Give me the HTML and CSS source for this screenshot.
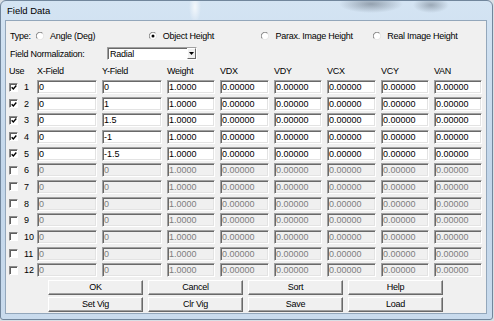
FILE: index.html
```html
<!DOCTYPE html>
<html>
<head>
<meta charset="utf-8">
<link rel="stylesheet" href="styles.css">
</head>
<body>
<div class="window">
  <div class="titlebar"><span class="title">Field Data</span></div>
  <div class="client">
    <div class="type-row">
      <span class="type-label">Type:</span>
      <span class="opt"><svg class="radio" viewBox="0 0 8 8"><circle cx="4" cy="4" r="3.5" fill="#fff"/><path d="M1.3 6.7A3.6 3.6 0 0 1 6.7 1.3" stroke="#7a7a7a" stroke-width="1" fill="none"/><path d="M6.7 1.3A3.6 3.6 0 0 1 1.3 6.7" stroke="#e3e3e3" stroke-width="1" fill="none"/></svg><span class="lbl">Angle (Deg)</span></span>
      <span class="opt"><svg class="radio" viewBox="0 0 8 8"><circle cx="4" cy="4" r="3.5" fill="#fff"/><path d="M1.3 6.7A3.6 3.6 0 0 1 6.7 1.3" stroke="#7a7a7a" stroke-width="1" fill="none"/><path d="M6.7 1.3A3.6 3.6 0 0 1 1.3 6.7" stroke="#e3e3e3" stroke-width="1" fill="none"/><circle cx="4" cy="4" r="1.5" fill="#000"/></svg><span class="lbl">Object Height</span></span>
      <span class="opt opt-narrow"><svg class="radio" viewBox="0 0 8 8"><circle cx="4" cy="4" r="3.5" fill="#fff"/><path d="M1.3 6.7A3.6 3.6 0 0 1 6.7 1.3" stroke="#7a7a7a" stroke-width="1" fill="none"/><path d="M6.7 1.3A3.6 3.6 0 0 1 1.3 6.7" stroke="#e3e3e3" stroke-width="1" fill="none"/></svg><span class="lbl">Parax. Image Height</span></span>
      <span class="opt"><svg class="radio" viewBox="0 0 8 8"><circle cx="4" cy="4" r="3.5" fill="#fff"/><path d="M1.3 6.7A3.6 3.6 0 0 1 6.7 1.3" stroke="#7a7a7a" stroke-width="1" fill="none"/><path d="M6.7 1.3A3.6 3.6 0 0 1 1.3 6.7" stroke="#e3e3e3" stroke-width="1" fill="none"/></svg><span class="lbl">Real Image Height</span></span>
    </div>
    <div class="norm-row">
      <span class="norm-label">Field Normalization:</span>
      <div class="combo"><span class="combo-text">Radial</span><span class="combo-btn"><svg width="5" height="3" viewBox="0 0 5 3"><path d="M0 0H5L2.5 3Z" fill="#000"/></svg></span></div>
    </div>
    <div class="grid head">
      <span>Use</span><span>X-Field</span><span>Y-Field</span><span>Weight</span><span>VDX</span><span>VDY</span><span>VCX</span><span>VCY</span><span>VAN</span>
    </div>
    <div class="grid rows">
      <div class="use"><span class="cb"><svg viewBox="0 0 7 7"><path d="M0.8 3.2L2.7 5.2L6.2 1.2" stroke="#000" stroke-width="1.6" fill="none"/></svg></span><span>1</span></div>
      <div class="fld">0</div><div class="fld">0</div><div class="fld">1.0000</div><div class="fld">0.00000</div><div class="fld">0.00000</div><div class="fld">0.00000</div><div class="fld">0.00000</div><div class="fld">0.00000</div>
      <div class="use"><span class="cb"><svg viewBox="0 0 7 7"><path d="M0.8 3.2L2.7 5.2L6.2 1.2" stroke="#000" stroke-width="1.6" fill="none"/></svg></span><span>2</span></div>
      <div class="fld">0</div><div class="fld">1</div><div class="fld">1.0000</div><div class="fld">0.00000</div><div class="fld">0.00000</div><div class="fld">0.00000</div><div class="fld">0.00000</div><div class="fld">0.00000</div>
      <div class="use"><span class="cb"><svg viewBox="0 0 7 7"><path d="M0.8 3.2L2.7 5.2L6.2 1.2" stroke="#000" stroke-width="1.6" fill="none"/></svg></span><span>3</span></div>
      <div class="fld">0</div><div class="fld">1.5</div><div class="fld">1.0000</div><div class="fld">0.00000</div><div class="fld">0.00000</div><div class="fld">0.00000</div><div class="fld">0.00000</div><div class="fld">0.00000</div>
      <div class="use"><span class="cb"><svg viewBox="0 0 7 7"><path d="M0.8 3.2L2.7 5.2L6.2 1.2" stroke="#000" stroke-width="1.6" fill="none"/></svg></span><span>4</span></div>
      <div class="fld">0</div><div class="fld">-1</div><div class="fld">1.0000</div><div class="fld">0.00000</div><div class="fld">0.00000</div><div class="fld">0.00000</div><div class="fld">0.00000</div><div class="fld">0.00000</div>
      <div class="use"><span class="cb"><svg viewBox="0 0 7 7"><path d="M0.8 3.2L2.7 5.2L6.2 1.2" stroke="#000" stroke-width="1.6" fill="none"/></svg></span><span>5</span></div>
      <div class="fld">0</div><div class="fld">-1.5</div><div class="fld">1.0000</div><div class="fld">0.00000</div><div class="fld">0.00000</div><div class="fld">0.00000</div><div class="fld">0.00000</div><div class="fld">0.00000</div>
      <div class="use"><span class="cb"></span><span>6</span></div>
      <div class="fld off">0</div><div class="fld off">0</div><div class="fld off">1.0000</div><div class="fld off">0.00000</div><div class="fld off">0.00000</div><div class="fld off">0.00000</div><div class="fld off">0.00000</div><div class="fld off">0.00000</div>
      <div class="use"><span class="cb"></span><span>7</span></div>
      <div class="fld off">0</div><div class="fld off">0</div><div class="fld off">1.0000</div><div class="fld off">0.00000</div><div class="fld off">0.00000</div><div class="fld off">0.00000</div><div class="fld off">0.00000</div><div class="fld off">0.00000</div>
      <div class="use"><span class="cb"></span><span>8</span></div>
      <div class="fld off">0</div><div class="fld off">0</div><div class="fld off">1.0000</div><div class="fld off">0.00000</div><div class="fld off">0.00000</div><div class="fld off">0.00000</div><div class="fld off">0.00000</div><div class="fld off">0.00000</div>
      <div class="use"><span class="cb"></span><span>9</span></div>
      <div class="fld off">0</div><div class="fld off">0</div><div class="fld off">1.0000</div><div class="fld off">0.00000</div><div class="fld off">0.00000</div><div class="fld off">0.00000</div><div class="fld off">0.00000</div><div class="fld off">0.00000</div>
      <div class="use"><span class="cb"></span><span>10</span></div>
      <div class="fld off">0</div><div class="fld off">0</div><div class="fld off">1.0000</div><div class="fld off">0.00000</div><div class="fld off">0.00000</div><div class="fld off">0.00000</div><div class="fld off">0.00000</div><div class="fld off">0.00000</div>
      <div class="use"><span class="cb"></span><span>11</span></div>
      <div class="fld off">0</div><div class="fld off">0</div><div class="fld off">1.0000</div><div class="fld off">0.00000</div><div class="fld off">0.00000</div><div class="fld off">0.00000</div><div class="fld off">0.00000</div><div class="fld off">0.00000</div>
      <div class="use"><span class="cb"></span><span>12</span></div>
      <div class="fld off">0</div><div class="fld off">0</div><div class="fld off">1.0000</div><div class="fld off">0.00000</div><div class="fld off">0.00000</div><div class="fld off">0.00000</div><div class="fld off">0.00000</div><div class="fld off">0.00000</div>
    </div>
    <div class="buttons">
      <div class="btn">OK</div><div class="btn">Cancel</div><div class="btn">Sort</div><div class="btn">Help</div>
      <div class="btn">Set Vig</div><div class="btn">Clr Vig</div><div class="btn">Save</div><div class="btn">Load</div>
    </div>
  </div>
</div>
</body>
</html>
```

FILE: styles.css
```css
html, body {
  margin: 0;
  padding: 0;
}
body {
  background: #d9dfe5;
  font-family: "Liberation Sans", Arial, sans-serif;
  font-size: 9px;
  color: #000;
}
.window {
  width: 493px;
  height: 320px;
  box-sizing: border-box;
  border: 1px solid #71869c;
  border-radius: 6px 6px 3px 3px;
  padding: 0 5px 5px 4px;
  display: flex;
  flex-direction: column;
  background:
    radial-gradient(ellipse 32px 9px at 370px 3px, rgba(70,80,92,.45), rgba(70,80,92,0)),
    radial-gradient(ellipse 18px 8px at 430px 4px, rgba(70,80,92,.4), rgba(70,80,92,0)),
    radial-gradient(ellipse 6px 16px at 194px 6px, rgba(255,255,255,.75), rgba(255,255,255,0)),
    linear-gradient(180deg, #d4e4f3 0%, #c2d6ea 55%, #c9dbed 100%);
}
.titlebar {
  height: 19px;
  display: flex;
  align-items: center;
  padding-left: 2px;
  flex: none;
}
.title {
  font-size: 9.5px;
  color: #000;
}
.client {
  flex: 1;
  border: 1px solid #93a7bb;
  background: #f0f0f0;
  display: flex;
  flex-direction: column;
  letter-spacing: -0.25px;
}
.type-row {
  margin-top: 8px;
  height: 14px;
  display: flex;
  align-items: center;
  padding-left: 4px;
}
.type-label {
  width: 26px;
}
.opt {
  display: flex;
  align-items: center;
  gap: 6px;
  width: 113px;
}
.opt-narrow {
  width: 112px;
}
.radio {
  width: 8px;
  height: 8px;
  flex: none;
}
.norm-row {
  margin-top: 4px;
  height: 13px;
  display: flex;
  align-items: center;
  padding-left: 4px;
}
.norm-label {
  width: 97px;
}
.combo {
  width: 90px;
  height: 13px;
  box-sizing: border-box;
  background: #fff;
  border: 1px solid;
  border-color: #a0a0a0 #fff #fff #a0a0a0;
  box-shadow: inset 1px 1px 0 #696969;
  display: flex;
  align-items: center;
  justify-content: space-between;
}
.combo-text {
  padding-left: 2px;
}
.combo-btn {
  width: 9px;
  height: 11px;
  box-sizing: border-box;
  background: #f0f0f0;
  border: 1px solid;
  border-color: #fff #696969 #696969 #fff;
  display: flex;
  align-items: center;
  justify-content: center;
}
.grid {
  display: grid;
  grid-template-columns: 23px 60px 60px 48px 49px 48px 49px 48px 48px;
  column-gap: 5px;
  padding-left: 3px;
}
.head {
  margin-top: 4px;
  height: 14px;
  align-items: center;
}
.rows {
  margin-top: 2px;
  grid-template-rows: repeat(12, 16.667px);
  letter-spacing: 0;
}
.use {
  display: flex;
  align-items: center;
  gap: 6px;
  height: 14px;
}
.cb {
  width: 9px;
  height: 9px;
  box-sizing: border-box;
  background: #fff;
  border: 1px solid;
  border-color: #8a8a8a #fff #fff #8a8a8a;
  box-shadow: inset 1px 1px 0 #5e5e5e;
  display: flex;
  align-items: center;
  justify-content: center;
  flex: none;
}
.cb svg {
  width: 7px;
  height: 7px;
  margin: 1px 0 0 1px;
}
.fld {
  height: 14px;
  box-sizing: border-box;
  background: #fff;
  border: 1px solid;
  border-color: #a0a0a0 #fff #fff #a0a0a0;
  box-shadow: inset 1px 1px 0 #696969, inset -1px -1px 0 #e3e3e3;
  padding-left: 1px;
  display: flex;
  align-items: center;
  overflow: hidden;
  white-space: nowrap;
}
.fld.off {
  background: #f0f0f0;
  color: #7d7d7d;
}
.buttons {
  display: grid;
  grid-template-columns: repeat(4, 95px);
  grid-auto-rows: 15px;
  column-gap: 5px;
  row-gap: 2px;
  padding-left: 42px;
}
.btn {
  box-sizing: border-box;
  background: #f0f0f0;
  border: 1px solid;
  border-color: #fff #696969 #696969 #fff;
  box-shadow: inset -1px -1px 0 #a0a0a0;
  display: flex;
  align-items: center;
  justify-content: center;
}
```
